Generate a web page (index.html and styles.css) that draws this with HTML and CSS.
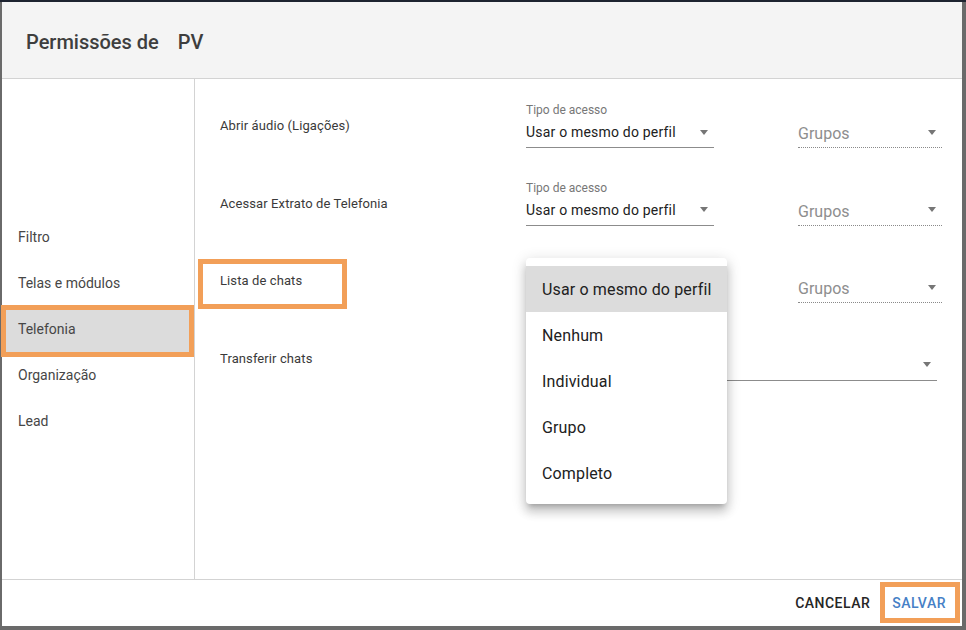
FILE: index.html
```html
<!DOCTYPE html>
<html lang="pt-BR">
<head>
<meta charset="utf-8">
<title>Permissões de PV</title>
<link rel="stylesheet" href="styles.css">
</head>
<body>
<div class="dialog">
  <header class="dialog-header">
    <h1 class="dialog-title">Permissões de<span class="title-name">PV</span></h1>
  </header>
  <div class="dialog-body">
    <nav class="sidebar">
      <div class="side-item">Filtro</div>
      <div class="side-item">Telas e módulos</div>
      <div class="side-item active">Telefonia<span class="mark mark-side"></span></div>
      <div class="side-item">Organização</div>
      <div class="side-item">Lead</div>
    </nav>
    <main class="content">
      <div class="perm-row">
        <div class="perm-label"><span class="label-text">Abrir áudio (Ligações)</span></div>
        <div class="field select">
          <div class="field-label">Tipo de acesso</div>
          <div class="field-value"><span class="value-text">Usar o mesmo do perfil</span><span class="arrow"></span></div>
        </div>
        <div class="field groups">
          <div class="field-value"><span class="placeholder">Grupos</span><span class="arrow arrow-up"></span></div>
        </div>
      </div>
      <div class="perm-row">
        <div class="perm-label"><span class="label-text">Acessar Extrato de Telefonia</span></div>
        <div class="field select">
          <div class="field-label">Tipo de acesso</div>
          <div class="field-value"><span class="value-text">Usar o mesmo do perfil</span><span class="arrow"></span></div>
        </div>
        <div class="field groups">
          <div class="field-value"><span class="placeholder">Grupos</span><span class="arrow arrow-up"></span></div>
        </div>
      </div>
      <div class="perm-row">
        <div class="perm-label"><span class="label-text">Lista de chats<span class="mark mark-label"></span></span></div>
        <div class="field select">
          <div class="field-label"></div>
          <div class="field-value"><span class="value-text"></span><span class="arrow"></span></div>
        </div>
        <div class="field groups">
          <div class="field-value"><span class="placeholder">Grupos</span><span class="arrow arrow-up"></span></div>
        </div>
      </div>
      <div class="perm-row">
        <div class="perm-label"><span class="label-text">Transferir chats</span></div>
        <div class="field select wide">
          <div class="field-label"></div>
          <div class="field-value"><span class="value-text"></span><span class="arrow"></span></div>
        </div>
      </div>

      <ul class="menu">
        <li class="menu-item selected">Usar o mesmo do perfil</li>
        <li class="menu-item">Nenhum</li>
        <li class="menu-item">Individual</li>
        <li class="menu-item">Grupo</li>
        <li class="menu-item">Completo</li>
      </ul>
    </main>
  </div>
  <footer class="dialog-footer">
    <button class="btn btn-cancel">Cancelar</button>
    <button class="btn btn-save">Salvar<span class="mark mark-btn"></span></button>
  </footer>
</div>
</body>
</html>
```

FILE: styles.css
```css
html, body {
  margin: 0;
  padding: 0;
}

body {
  width: 966px;
  height: 630px;
  box-sizing: border-box;
  background: #6a6a6a;
  border-top: 2px solid #1d2330;
  padding: 0 4px 4px 2px;
  font-family: Roboto, "Liberation Sans", Arial, sans-serif;
  overflow: hidden;
}

.dialog {
  width: 960px;
  height: 624px;
  background: #ffffff;
  display: flex;
  flex-direction: column;
}

.dialog-header {
  flex: none;
  box-sizing: border-box;
  height: 77px;
  background: #f4f4f4;
  border-bottom: 1px solid #d3d3d3;
  display: flex;
  align-items: center;
  padding: 4px 0 0 24px;
}

.dialog-title {
  margin: 0;
  font-size: 20px;
  font-weight: 500;
  color: #3e3e3e;
  letter-spacing: 0;
}

.title-name {
  margin-left: 19px;
}

.dialog-body {
  flex: none;
  height: 500px;
  display: flex;
}

.sidebar {
  width: 192px;
  flex: 0 0 192px;
  border-right: 1px solid #d3d3d3;
  display: flex;
  flex-direction: column;
  justify-content: center;
}

.side-item {
  position: relative;
  height: 46px;
  display: flex;
  align-items: center;
  padding-left: 16px;
  font-size: 14px;
  color: #464646;
}

.side-item.active {
  background: #dcdcdc;
}

.mark {
  position: absolute;
  border: 5px solid #f29f58;
  box-sizing: border-box;
  pointer-events: none;
}

.mark-side {
  left: -1px;
  right: 0;
  top: -1px;
  bottom: -5px;
}

.content {
  position: relative;
  flex: 1;
  padding: 8px 20px 0 25px;
}

.perm-row {
  height: 77.5px;
  display: flex;
  align-items: flex-start;
}

.perm-label {
  width: 306px;
  flex: 0 0 306px;
  margin-top: 31px;
  line-height: 16px;
  font-size: 13px;
  letter-spacing: 0.1px;
  color: #3a3a3a;
}

.label-text {
  position: relative;
  display: inline-block;
}

.mark-label {
  left: -22px;
  width: 149px;
  top: -14px;
  bottom: -20px;
}

.field {
  margin-top: 15px;
  position: relative;
}

.field.select {
  width: 188px;
  flex: 0 0 188px;
  border-bottom: 1px solid #8c8c8c;
  padding-bottom: 5px;
}

.field.select.wide {
  width: 411px;
  flex: 0 0 411px;
}

.field-label {
  height: 16px;
  font-size: 12px;
  line-height: 16px;
  color: #777777;
}

.field-value {
  display: flex;
  align-items: center;
  height: 20px;
  line-height: 20px;
}

.field.select .field-value {
  margin-top: 4px;
  font-size: 14px;
  letter-spacing: 0.2px;
  color: #212121;
}

.value-text {
  flex: 1;
}

.field.groups {
  width: 144px;
  flex: 0 0 144px;
  margin-left: 84px;
  padding-top: 22px;
  padding-bottom: 3px;
  border-bottom: 1px dotted #8a8a8a;
}

.placeholder {
  flex: 1;
  font-size: 16px;
  color: #8e8e8e;
}

.arrow {
  width: 0;
  height: 0;
  border-left: 4.5px solid transparent;
  border-right: 4.5px solid transparent;
  border-top: 5px solid #767676;
  margin-right: 6px;
}

.arrow-up {
  margin-bottom: 4px;
}

.menu {
  position: absolute;
  left: 331px;
  top: 179px;
  width: 201px;
  margin: 0;
  padding: 8px 0;
  list-style: none;
  background: #ffffff;
  border-radius: 4px;
  box-shadow: 0 5px 5px -3px rgba(0, 0, 0, 0.2), 0 8px 10px 1px rgba(0, 0, 0, 0.14), 0 3px 14px 2px rgba(0, 0, 0, 0.12);
}

.menu-item {
  height: 46px;
  display: flex;
  align-items: center;
  padding-left: 16px;
  font-size: 16px;
  letter-spacing: 0.15px;
  color: #212121;
}

.menu-item.selected {
  background: #dcdcdc;
}

.dialog-footer {
  flex: none;
  box-sizing: border-box;
  height: 47px;
  border-top: 1px solid #d3d3d3;
  display: flex;
  align-items: center;
  justify-content: flex-end;
  gap: 6px;
  padding-right: 8px;
}

.btn {
  position: relative;
  height: 36px;
  padding: 0 8px;
  border: none;
  background: transparent;
  font-family: Roboto, "Liberation Sans", Arial, sans-serif;
  font-size: 14px;
  font-weight: 500;
  letter-spacing: 0.5px;
  text-transform: uppercase;
  cursor: pointer;
}

.btn-cancel {
  color: #262626;
}

.btn-save {
  color: #4680c6;
}

.mark-btn {
  left: -4px;
  right: -6px;
  top: -3px;
  bottom: -2px;
}
```
